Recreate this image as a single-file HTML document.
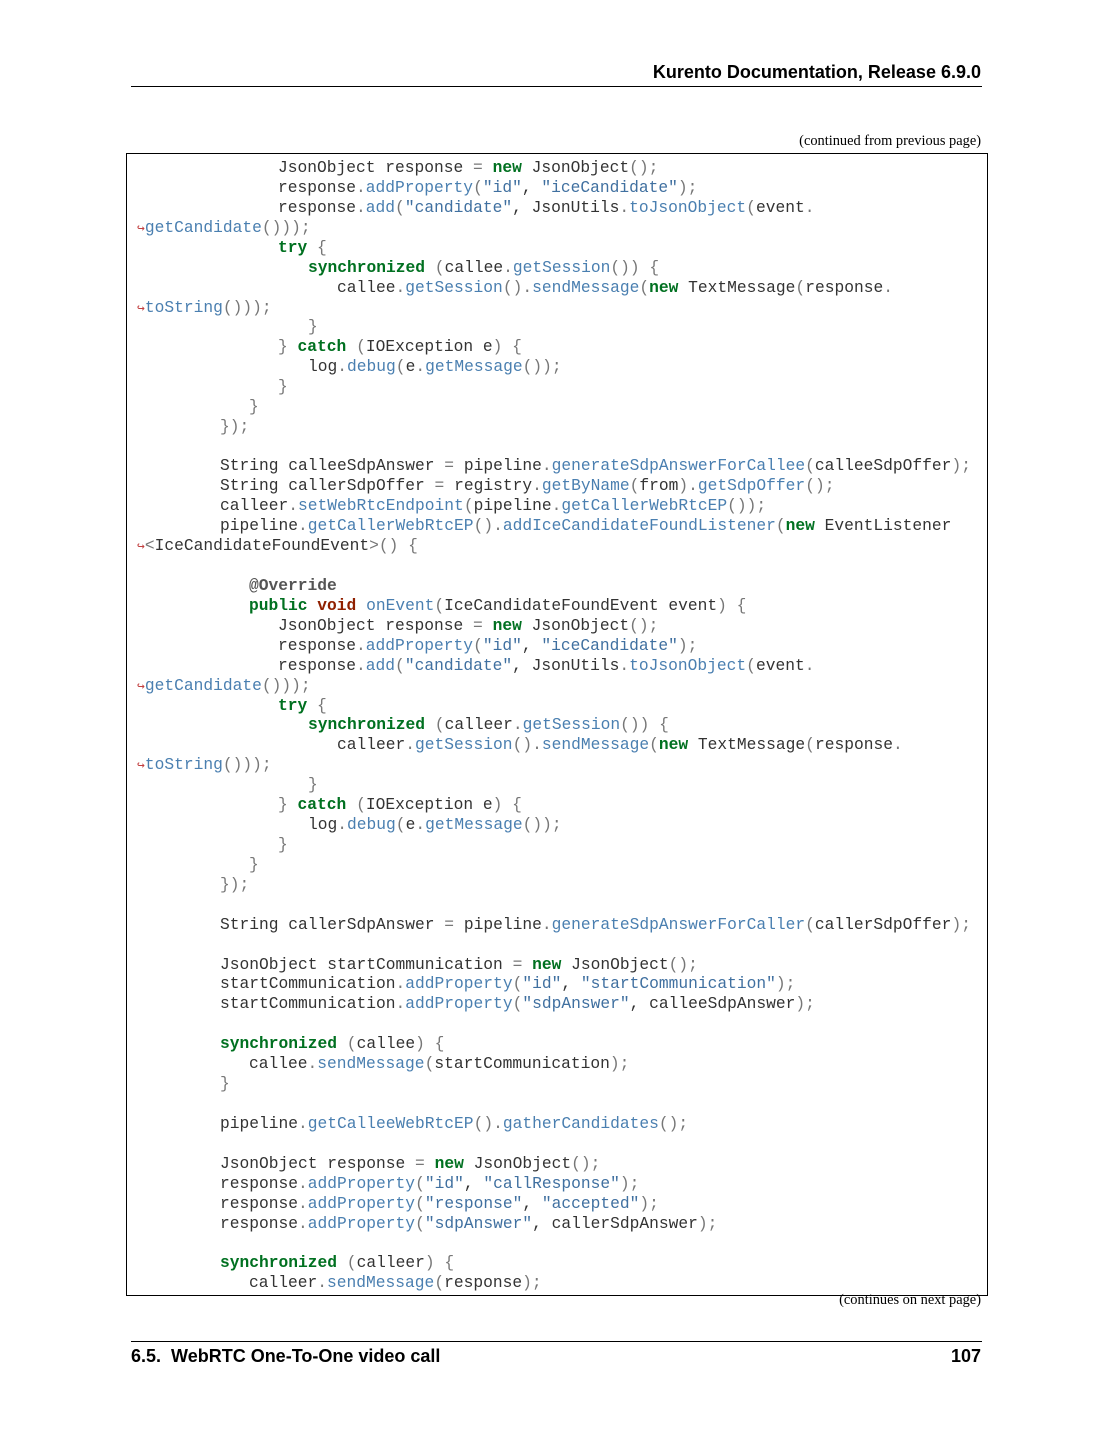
<!DOCTYPE html>
<html><head><meta charset="utf-8"><style>
body{margin:0;background:#fff;}
.page{position:relative;width:1113px;height:1440px;overflow:hidden;background:#fff;font-family:"Liberation Sans",sans-serif;color:#000;}
.hdr{position:absolute;right:132px;top:62px;font-weight:bold;font-size:18px;}
.hl{position:absolute;left:131px;width:851px;top:86px;border-top:1px solid #000;}
.cont{position:absolute;right:132px;font-family:"Liberation Serif",serif;font-size:14.4px;}
.box{position:absolute;left:126px;top:153px;width:860px;height:1141px;border:1px solid #000;}
.code{position:absolute;left:0;top:158px;width:1113px;font-family:"Liberation Mono",monospace;font-size:16.25px;color:#333;}
.code div{position:absolute;white-space:pre;height:20px;line-height:20px;}
.k{color:#007020;font-weight:bold}.t{color:#902000;font-weight:bold}.m{color:#4a7fb0}.s{color:#4070a0}.p{color:#777}.d{color:#555;font-weight:bold}.a{color:#c24040;font-size:13px}
.fl{position:absolute;left:131px;width:851px;top:1341px;border-top:1px solid #000;}
.ft{position:absolute;top:1346px;font-weight:bold;font-size:18px;}
</style></head><body><div class="page">
<div class="hdr">Kurento Documentation, Release 6.9.0</div>
<div class="hl"></div>
<div class="cont" style="top:133px">(continued from previous page)</div>
<div class="box"></div>
<div class="code">
<div style="left:278px;top:0px">JsonObject response <span class="p">=</span> <span class="k">new</span> JsonObject<span class="p">();</span></div>
<div style="left:278px;top:20px">response<span class="p">.</span><span class="m">addProperty</span><span class="p">(</span><span class="s">"id"</span>, <span class="s">"iceCandidate"</span><span class="p">);</span></div>
<div style="left:278px;top:40px">response<span class="p">.</span><span class="m">add</span><span class="p">(</span><span class="s">"candidate"</span>, JsonUtils<span class="p">.</span><span class="m">toJsonObject</span><span class="p">(</span>event<span class="p">.</span></div>
<div style="left:137px;top:60px"><span class="a">↪</span><span class="m">getCandidate</span><span class="p">()));</span></div>
<div style="left:278px;top:80px"><span class="k">try</span> <span class="p">{</span></div>
<div style="left:308px;top:100px"><span class="k">synchronized</span> <span class="p">(</span>callee<span class="p">.</span><span class="m">getSession</span><span class="p">()) {</span></div>
<div style="left:337px;top:120px">callee<span class="p">.</span><span class="m">getSession</span><span class="p">().</span><span class="m">sendMessage</span><span class="p">(</span><span class="k">new</span> TextMessage<span class="p">(</span>response<span class="p">.</span></div>
<div style="left:137px;top:140px"><span class="a">↪</span><span class="m">toString</span><span class="p">()));</span></div>
<div style="left:308px;top:159px" class="p">}</div>
<div style="left:278px;top:179px"><span class="p">}</span> <span class="k">catch</span> <span class="p">(</span>IOException e<span class="p">) {</span></div>
<div style="left:308px;top:199px">log<span class="p">.</span><span class="m">debug</span><span class="p">(</span>e<span class="p">.</span><span class="m">getMessage</span><span class="p">());</span></div>
<div style="left:278px;top:219px" class="p">}</div>
<div style="left:249px;top:239px" class="p">}</div>
<div style="left:220px;top:259px"><span class="p">});</span></div>
<div style="left:220px;top:298px">String calleeSdpAnswer <span class="p">=</span> pipeline<span class="p">.</span><span class="m">generateSdpAnswerForCallee</span><span class="p">(</span>calleeSdpOffer<span class="p">);</span></div>
<div style="left:220px;top:318px">String callerSdpOffer <span class="p">=</span> registry<span class="p">.</span><span class="m">getByName</span><span class="p">(</span>from<span class="p">).</span><span class="m">getSdpOffer</span><span class="p">();</span></div>
<div style="left:220px;top:338px">calleer<span class="p">.</span><span class="m">setWebRtcEndpoint</span><span class="p">(</span>pipeline<span class="p">.</span><span class="m">getCallerWebRtcEP</span><span class="p">());</span></div>
<div style="left:220px;top:358px">pipeline<span class="p">.</span><span class="m">getCallerWebRtcEP</span><span class="p">().</span><span class="m">addIceCandidateFoundListener</span><span class="p">(</span><span class="k">new</span> EventListener</div>
<div style="left:137px;top:378px"><span class="a">↪</span><span class="p">&lt;</span>IceCandidateFoundEvent<span class="p">&gt;() {</span></div>
<div style="left:249px;top:418px" class="d">@Override</div>
<div style="left:249px;top:438px"><span class="k">public</span> <span class="t">void</span> <span class="m">onEvent</span><span class="p">(</span>IceCandidateFoundEvent event<span class="p">) {</span></div>
<div style="left:278px;top:458px">JsonObject response <span class="p">=</span> <span class="k">new</span> JsonObject<span class="p">();</span></div>
<div style="left:278px;top:478px">response<span class="p">.</span><span class="m">addProperty</span><span class="p">(</span><span class="s">"id"</span>, <span class="s">"iceCandidate"</span><span class="p">);</span></div>
<div style="left:278px;top:498px">response<span class="p">.</span><span class="m">add</span><span class="p">(</span><span class="s">"candidate"</span>, JsonUtils<span class="p">.</span><span class="m">toJsonObject</span><span class="p">(</span>event<span class="p">.</span></div>
<div style="left:137px;top:518px"><span class="a">↪</span><span class="m">getCandidate</span><span class="p">()));</span></div>
<div style="left:278px;top:538px"><span class="k">try</span> <span class="p">{</span></div>
<div style="left:308px;top:557px"><span class="k">synchronized</span> <span class="p">(</span>calleer<span class="p">.</span><span class="m">getSession</span><span class="p">()) {</span></div>
<div style="left:337px;top:577px">calleer<span class="p">.</span><span class="m">getSession</span><span class="p">().</span><span class="m">sendMessage</span><span class="p">(</span><span class="k">new</span> TextMessage<span class="p">(</span>response<span class="p">.</span></div>
<div style="left:137px;top:597px"><span class="a">↪</span><span class="m">toString</span><span class="p">()));</span></div>
<div style="left:308px;top:617px" class="p">}</div>
<div style="left:278px;top:637px"><span class="p">}</span> <span class="k">catch</span> <span class="p">(</span>IOException e<span class="p">) {</span></div>
<div style="left:308px;top:657px">log<span class="p">.</span><span class="m">debug</span><span class="p">(</span>e<span class="p">.</span><span class="m">getMessage</span><span class="p">());</span></div>
<div style="left:278px;top:677px" class="p">}</div>
<div style="left:249px;top:697px" class="p">}</div>
<div style="left:220px;top:717px"><span class="p">});</span></div>
<div style="left:220px;top:757px">String callerSdpAnswer <span class="p">=</span> pipeline<span class="p">.</span><span class="m">generateSdpAnswerForCaller</span><span class="p">(</span>callerSdpOffer<span class="p">);</span></div>
<div style="left:220px;top:797px">JsonObject startCommunication <span class="p">=</span> <span class="k">new</span> JsonObject<span class="p">();</span></div>
<div style="left:220px;top:816px">startCommunication<span class="p">.</span><span class="m">addProperty</span><span class="p">(</span><span class="s">"id"</span>, <span class="s">"startCommunication"</span><span class="p">);</span></div>
<div style="left:220px;top:836px">startCommunication<span class="p">.</span><span class="m">addProperty</span><span class="p">(</span><span class="s">"sdpAnswer"</span>, calleeSdpAnswer<span class="p">);</span></div>
<div style="left:220px;top:876px"><span class="k">synchronized</span> <span class="p">(</span>callee<span class="p">) {</span></div>
<div style="left:249px;top:896px">callee<span class="p">.</span><span class="m">sendMessage</span><span class="p">(</span>startCommunication<span class="p">);</span></div>
<div style="left:220px;top:916px" class="p">}</div>
<div style="left:220px;top:956px">pipeline<span class="p">.</span><span class="m">getCalleeWebRtcEP</span><span class="p">().</span><span class="m">gatherCandidates</span><span class="p">();</span></div>
<div style="left:220px;top:996px">JsonObject response <span class="p">=</span> <span class="k">new</span> JsonObject<span class="p">();</span></div>
<div style="left:220px;top:1016px">response<span class="p">.</span><span class="m">addProperty</span><span class="p">(</span><span class="s">"id"</span>, <span class="s">"callResponse"</span><span class="p">);</span></div>
<div style="left:220px;top:1036px">response<span class="p">.</span><span class="m">addProperty</span><span class="p">(</span><span class="s">"response"</span>, <span class="s">"accepted"</span><span class="p">);</span></div>
<div style="left:220px;top:1056px">response<span class="p">.</span><span class="m">addProperty</span><span class="p">(</span><span class="s">"sdpAnswer"</span>, callerSdpAnswer<span class="p">);</span></div>
<div style="left:220px;top:1095px"><span class="k">synchronized</span> <span class="p">(</span>calleer<span class="p">) {</span></div>
<div style="left:249px;top:1115px">calleer<span class="p">.</span><span class="m">sendMessage</span><span class="p">(</span>response<span class="p">);</span></div>
</div>
<div class="cont" style="top:1292px">(continues on next page)</div>
<div class="fl"></div>
<div class="ft" style="left:131px">6.5.&nbsp; WebRTC One-To-One video call</div>
<div class="ft" style="right:132px">107</div>
</div></body></html>
